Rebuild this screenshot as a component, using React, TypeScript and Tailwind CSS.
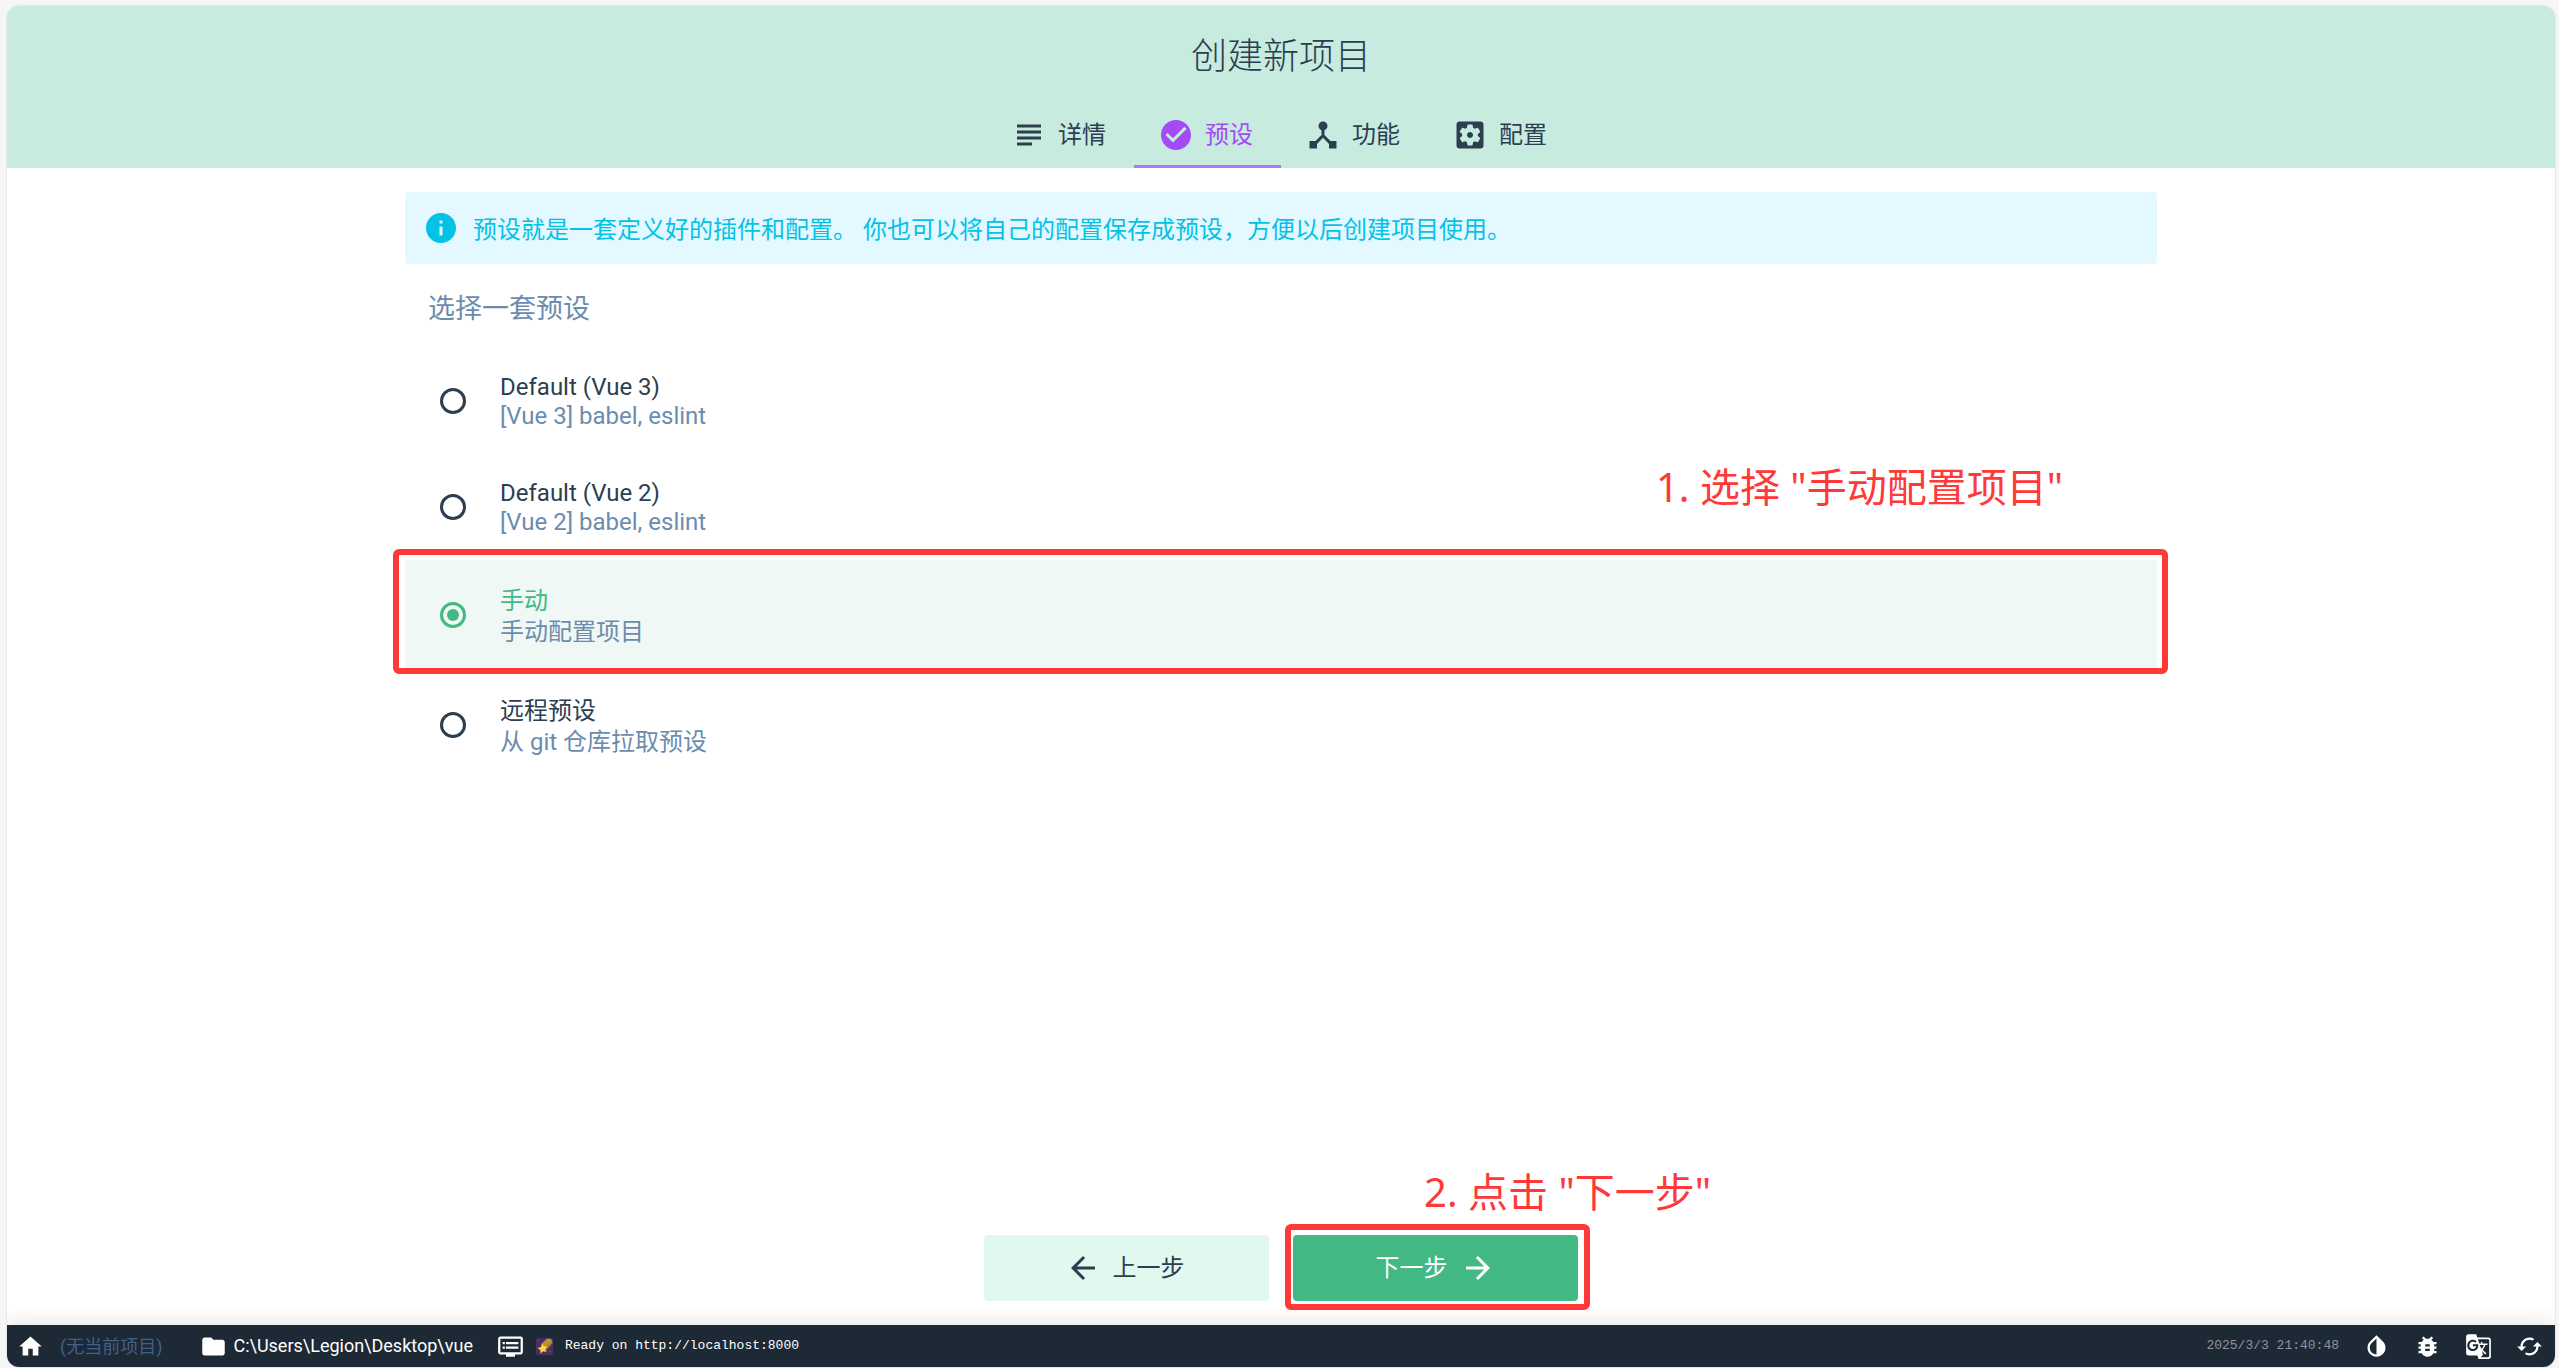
import React, { useState } from 'react';
import {
  MdSubject,
  MdCheckCircle,
  MdDeviceHub,
  MdSettingsApplications,
  MdInfo,
  MdArrowBack,
  MdArrowForward,
  MdHome,
  MdFolder,
  MdDvr,
  MdInvertColors,
  MdBugReport,
  MdGTranslate,
  MdCached
} from 'react-icons/md';

interface Preset {
  id: string;
  name: string;
  description: string;
  rowClass: string;
  textClass: string;
}

const tabs = [
  { id: 'details', label: '详情', icon: MdSubject },
  { id: 'presets', label: '预设', icon: MdCheckCircle },
  { id: 'features', label: '功能', icon: MdDeviceHub },
  { id: 'config', label: '配置', icon: MdSettingsApplications }
];

// Chinese lines stand slightly taller than latin ones
const latinRow = { rowClass: 'min-h-[106px]', textClass: 'pt-0.5 leading-[29px]' };
const chineseRow = { rowClass: 'min-h-[110px]', textClass: 'pt-1 leading-[31px]' };

const presets: Preset[] = [
  { id: 'vue3', name: 'Default (Vue 3)', description: '[Vue 3] babel, eslint', ...latinRow },
  { id: 'vue2', name: 'Default (Vue 2)', description: '[Vue 2] babel, eslint', ...latinRow },
  { id: 'manual', name: '手动', description: '手动配置项目', ...chineseRow },
  { id: 'remote', name: '远程预设', description: '从 git 仓库拉取预设', ...chineseRow }
];

const tools = [
  { label: '切换主题', icon: MdInvertColors },
  { label: '报告问题', icon: MdBugReport },
  { label: '翻译', icon: MdGTranslate },
  { label: '刷新', icon: MdCached }
];

const noteClass =
  "pointer-events-none absolute bottom-full whitespace-nowrap text-[40px] leading-[56px] text-[#ff3838] [font-family:'Noto_Sans','Noto_Sans_CJK_SC',sans-serif]";

const CometIcon = () => (
  <svg viewBox="0 0 17 17" className="size-[17px]" aria-hidden="true">
    <rect width="17" height="17" rx="2" fill="#4a2f63" />
    <path d="M5 6 L11 0.5 Q16.500 0 16.500 5 L10.500 12 Z" fill="#a8842f" />
    <path d="M7 5 L12 0.800 Q15.500 0.500 15.800 3 L9 9 Z" fill="#b8933a" />
    <path d="M6.300 5.500 L8 8.300 L11.300 8.200 L9.300 10.900 L10.600 14 L7.300 13.200 L4.600 15.400 L4.400 12 L1.600 10.100 L4.900 8.900 Z" fill="#ffd93b" />
    <circle cx="2.500" cy="3" r="0.600" fill="#8c6bab" />
    <circle cx="14" cy="13.500" r="0.600" fill="#8c6bab" />
  </svg>
);

const Header = () => {
  const [active, setActive] = useState('presets');

  return (
    <header className="bg-[#c7ebdf] pt-6 text-[#2c3e50]">
      <h1 className="text-center text-4xl font-light leading-[54px]">创建新项目</h1>
      <div role="tablist" className="mt-[18px] flex justify-center">
        {tabs.map(({ id, label, icon: Icon }) => (
          <button
            key={id}
            type="button"
            role="tab"
            aria-selected={active === id}
            onClick={() => setActive(id)}
            className={`relative flex h-[66px] items-center gap-[11px] pl-6 pr-7 text-2xl ${active === id ? 'text-[#a44bf7]' : ''}`}
          >
            <Icon size={36} />
            {label}
            {active === id && <span className="absolute inset-x-0 bottom-0 h-[3px] bg-[#ae78f0]" />}
          </button>
        ))}
      </div>
    </header>
  );
};

const StatusBar = () => (
  <footer className="relative flex h-[42px] items-center justify-between bg-[#1d2935] pl-2.5 pr-3 text-lg text-white shadow-[0_-2px_20px_rgba(0,0,0,0.12)]">
    <div className="flex items-center">
      <button type="button" aria-label="主页"><MdHome size={27} /></button>
      <span className="ml-4 pt-0.5 text-[#42608a]">(无当前项目)</span>
      <button type="button" className="ml-[38px] flex items-center gap-1.5">
        <MdFolder size={27} />
        C:\Users\Legion\Desktop\vue
      </button>
      <button type="button" className="ml-6 flex items-center gap-3">
        <MdDvr size={27} />
        <CometIcon />
        <span className="text-[13px] [font-family:'Liberation_Mono',monospace]">Ready on http://localhost:8000</span>
      </button>
    </div>
    <div className="flex items-center gap-6">
      <time className="text-[13px] text-[#8e949a] [font-family:'Liberation_Mono',monospace]">2025/3/3 21:40:48</time>
      {tools.map(({ label, icon: Icon }) => (
        <button key={label} type="button" aria-label={label}><Icon size={27} /></button>
      ))}
    </div>
  </footer>
);

const App = () => {
  const [selected, setSelected] = useState('manual');

  return (
    <div className="flex min-h-screen bg-[#f6f6f6] pb-px pl-[7px] pr-1 pt-1.5 text-[#2c3e50] [font-family:Roboto,'Noto_Sans_CJK_SC',sans-serif]">
      <div className="flex flex-1 flex-col overflow-hidden rounded-xl bg-white shadow-[0_0_2px_rgba(0,0,0,0.2)]">
        <Header />

        <main className="mx-auto flex w-full max-w-[1752px] flex-1 flex-col pt-6">
          <div className="flex h-[72px] items-center gap-[14px] rounded bg-[#e3f9ff] pl-[18px] text-2xl text-[#03c2e6]">
            <MdInfo size={36} />
            <p className="pt-[3px]">预设就是一套定义好的插件和配置。 你也可以将自己的配置保存成预设，方便以后创建项目使用。</p>
          </div>

          <h2 className="mb-[21px] mt-[27px] pl-[23px] text-[27px] leading-9 text-[#6b8cae]">选择一套预设</h2>

          <div role="radiogroup" aria-label="选择一套预设">
            {presets.map((preset) => {
              const checked = preset.id === selected;
              return (
                <div key={preset.id} className="relative">
                  <label
                    htmlFor={preset.id}
                    className={`flex cursor-pointer items-center gap-[34px] pl-[35px] text-2xl ${preset.rowClass} ${checked ? 'bg-[#eff8f4]' : ''}`}
                  >
                    <input
                      id={preset.id}
                      type="radio"
                      name="preset"
                      checked={checked}
                      onChange={() => setSelected(preset.id)}
                      className="flex size-[26px] appearance-none items-center justify-center rounded-full border-3 border-[#2c3e50] checked:border-[#42b983] checked:before:size-3 checked:before:rounded-full checked:before:bg-[#42b983] checked:before:content-['']"
                    />
                    <span className={preset.textClass}>
                      <span className={`block ${checked ? 'text-[#42b983]' : ''}`}>{preset.name}</span>
                      <span className="block text-[#6b8cae]">{preset.description}</span>
                    </span>
                  </label>
                  {preset.id === 'manual' && (
                    <>
                      <div className="pointer-events-none absolute -bottom-1 -left-3 -right-[11px] -top-[11px] rounded-md border-6 border-[#ff3838]" />
                      <p className={`right-[94px] mb-[45px] ${noteClass}`}>1. 选择 "手动配置项目"</p>
                    </>
                  )}
                </div>
              );
            })}
          </div>

          <div className="mt-auto flex justify-center gap-6 py-6 text-2xl">
            <button type="button" className="flex h-[66px] w-[285px] items-center justify-center gap-3 rounded bg-[#e0f8ed] pr-1">
              <MdArrowBack size={36} />
              上一步
            </button>
            <div className="relative">
              <button type="button" className="flex h-[66px] w-[285px] items-center justify-center gap-3 rounded bg-[#42b983] text-white">
                下一步
                <MdArrowForward size={36} />
              </button>
              <div className="pointer-events-none absolute -bottom-[9px] -left-2 -right-3 -top-[11px] rounded-md border-6 border-[#ff3838]" />
              <p className={`left-[131px] mb-[15px] ${noteClass}`}>2. 点击 "下一步"</p>
            </div>
          </div>
        </main>

        <StatusBar />
      </div>
    </div>
  );
};

export default App;
